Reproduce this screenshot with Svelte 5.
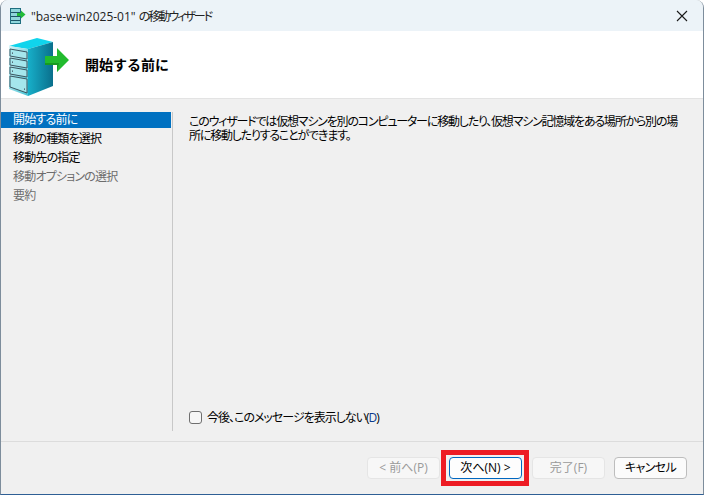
<script>
  const steps = [
    { label: '開始する前に', state: 'active' },
    { label: '移動の種類を選択', state: '' },
    { label: '移動先の指定', state: '' },
    { label: '移動オプションの選択', state: 'off' },
    { label: '要約', state: 'off' },
  ];
</script>

<div class="window">
  <div class="titlebar">
    <svg class="appicon" width="16" height="16" viewBox="0 0 16 16">
      <rect x="0.500" y="0.500" width="10" height="15" fill="#8fd6dc" stroke="#1f6f80" />
      <path d="M1 4.500h9M1 8.500h9M1 12.500h9" stroke="#1d5566" />
      <path d="M7 5h4V2.500L15.500 6.500 11 10.500V8H7z" fill="#22bb3a" />
    </svg>
    <span class="title">"base-win2025-01" <span class="tight">の移動ウィザード</span></span>
    <svg class="close" width="12" height="12" viewBox="0 0 12 12">
      <path d="M1 1l10 10M11 1L1 11" stroke="#1a1a1a" stroke-width="1.1" />
    </svg>
  </div>

  <div class="header">
    <svg class="hero" width="46" height="60" viewBox="0 0 46 60">
      <defs>
        <linearGradient id="side" x1="0" y1="0" x2="1" y2="0">
          <stop offset="0" stop-color="#17afc9" />
          <stop offset="1" stop-color="#0a6f8c" />
        </linearGradient>
        <linearGradient id="front" x1="0" y1="0" x2="1" y2="1">
          <stop offset="0" stop-color="#d8f3f6" />
          <stop offset="1" stop-color="#45c3d4" />
        </linearGradient>
      </defs>
      <path d="M0 9L28 1l16 4-25 7z" fill="#10d4ec" />
      <path d="M19 12l25-7v44l-25 10z" fill="url(#side)" />
      <path d="M0 9l19 3v47L0 52z" fill="url(#front)" />
      <path d="M1 12l17 3v7L1 19zM1 21l17 3v7L1 28zM1 30l17 3v7L1 37zM1 39l17 3v14L1 50z" fill="#a5e6ec" stroke="#3b5560" />
      <path d="M3 16l1 .2M3 25l1 .2M3 34l1 .2M15 52l1 .2" stroke="#223" />
    </svg>
    <svg class="arrow" width="24" height="24" viewBox="0 0 24 24">
      <path d="M0 8h12V0l12 12-12 12v-7H0z" fill="#22bb2e" />
      <path d="M12 24v-7H0v-2h14z" fill="#169a22" />
    </svg>
    <h1>開始する前に</h1>
  </div>

  <div class="body">
    <nav class="steps">
      {#each steps as step}
        <div class="step {step.state}">{step.label}</div>
      {/each}
    </nav>
    <main class="content">
      <p>このウィザードでは仮想マシンを別のコンピューターに移動したり、仮想マシン記憶域をある場所から別の場所に移動したりすることができます。</p>
      <label class="check">
        <span class="box"></span>
        <span class="check-text">今後、このメッセージを表示しない(<span class="key">D</span>)</span>
      </label>
    </main>
  </div>

  <div class="footer">
    <div class="btn off">&lt; 前へ(P)</div>
    <div class="highlight"><div class="btn primary">次へ(N) &gt;</div></div>
    <div class="btn off">完了(F)</div>
    <div class="btn cancel">キャンセル</div>
  </div>
</div>

<style>
  :global(body) {
    margin: 0;
    background: #fff;
  }
  .window {
    width: 704px;
    height: 495px;
    box-sizing: border-box;
    display: flex;
    flex-direction: column;
    background: #f0f0f0;
    border-left: 1px solid #7d8d9c;
    border-right: 1px solid #7d8d9c;
    border-bottom: 1px solid #2f5f95;
    border-radius: 8px 8px 0 0;
    overflow: hidden;
    font-family: "Open Sans", "Noto Sans CJK JP", sans-serif;
    font-size: 12px;
    font-feature-settings: "palt";
    color: #000;
  }
  .titlebar {
    height: 31px;
    flex: none;
    display: flex;
    align-items: center;
    padding: 0 15px 0 9px;
    background: #ecf3f8;
  }
  .appicon {
    flex: none;
  }
  .title {
    margin-left: 5px;
    flex: 1;
    color: #222;
  }
  .tight {
    letter-spacing: -2px;
  }
  .header {
    height: 67px;
    flex: none;
    display: flex;
    align-items: center;
    background: #fff;
    border-bottom: 1px solid #e3e3e3;
    position: relative;
  }
  .hero {
    margin: 4px 0 0 8px;
    flex: none;
  }
  .arrow {
    position: absolute;
    left: 44px;
    top: 17px;
  }
  h1 {
    margin: 0 0 0 30px;
    font-size: 14px;
    font-weight: 700;
    line-height: 20px;
    font-feature-settings: normal;
  }
  .body {
    flex: 1;
    display: flex;
    padding-top: 13px;
    min-height: 0;
  }
  .steps {
    width: 170px;
    flex: none;
    padding-right: 1px;
    border-right: 1px solid #c8c8c8;
    height: 319px;
  }
  .step {
    height: 16px;
    line-height: 16px;
    margin-bottom: 3px;
    padding-left: 12px;
    letter-spacing: -0.8px;
  }
  .step.active {
    background: #0071c1;
    color: #fff;
  }
  .step.off {
    color: #6d6d6d;
  }
  .content {
    flex: 1;
    display: flex;
    flex-direction: column;
    padding: 3px 20px 0 16px;
    height: 316px;
  }
  .content p {
    margin: 0;
    line-height: 14px;
    letter-spacing: -1.2px;
  }
  .check {
    margin-top: auto;
    display: flex;
    align-items: center;
    gap: 5px;
    margin-bottom: 5px;
  }
  .check-text {
    letter-spacing: -1px;
  }
  .box {
    width: 11px;
    height: 11px;
    border: 1px solid #6f6f6f;
    border-radius: 3px;
    background: #f6f6f6;
  }
  .key {
    color: #0a3a8c;
  }
  .footer {
    height: 53px;
    flex: none;
    box-sizing: border-box;
    border-top: 1px solid #dcdcdc;
    display: flex;
    align-items: center;
    justify-content: flex-end;
    padding: 0 16px 0 0;
  }
  .btn {
    width: 71px;
    height: 20px;
    line-height: 20px;
    text-align: center;
    border: 1px solid #d0d0d0;
    border-radius: 4px;
    background: #fbfbfb;
  }
  .btn.off {
    color: #9a9a9a;
    border-color: #e5e5e5;
    background: #f7f7f7;
  }
  .btn.cancel {
    margin-left: 9px;
    border-color: #bdbdbd;
    letter-spacing: -0.6px;
  }
  .highlight {
    margin: 0 3px 0 1px;
    border: 5px solid #ed1c24;
    padding: 2px 2px 2px 3px;
    background: #f0f0f0;
  }
  .btn.primary {
    border-color: #0067c0;
    background: #fdfdfd;
  }
</style>
